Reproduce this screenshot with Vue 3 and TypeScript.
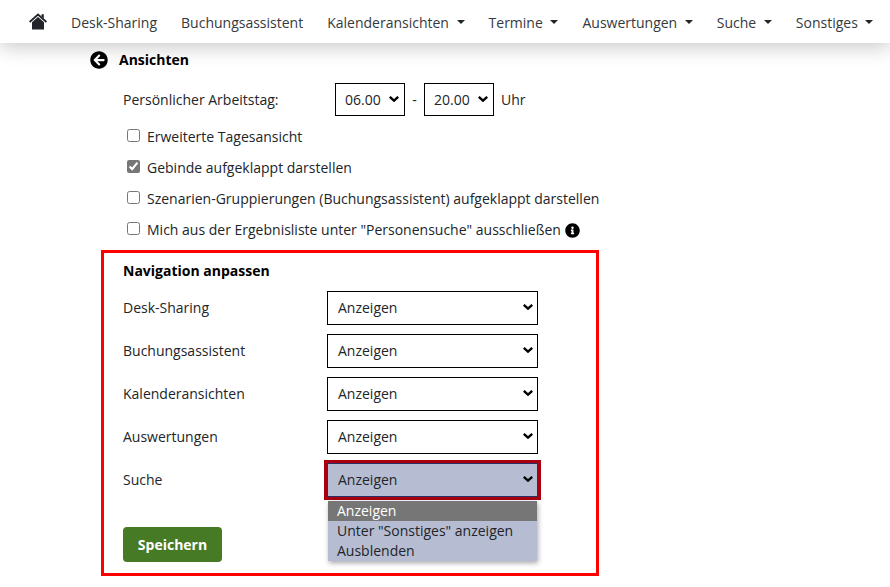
<script setup lang="ts">
const navItems = [
  { label: 'Desk-Sharing', caret: false },
  { label: 'Buchungsassistent', caret: false },
  { label: 'Kalenderansichten', caret: true },
  { label: 'Termine', caret: true },
  { label: 'Auswertungen', caret: true },
  { label: 'Suche', caret: true },
  { label: 'Sonstiges', caret: true },
]
const checks = [
  { label: 'Erweiterte Tagesansicht', checked: false, info: false },
  { label: 'Gebinde aufgeklappt darstellen', checked: true, info: false },
  { label: 'Szenarien-Gruppierungen (Buchungsassistent) aufgeklappt darstellen', checked: false, info: false },
  { label: 'Mich aus der Ergebnisliste unter "Personensuche" ausschließen', checked: false, info: true },
]
const rows = ['Desk-Sharing', 'Buchungsassistent', 'Kalenderansichten', 'Auswertungen']
const options = ['Anzeigen', 'Unter "Sonstiges" anzeigen', 'Ausblenden']
</script>

<template>
  <div class="page">
    <nav class="navbar">
      <a class="home" aria-label="Start">
        <svg width="18" height="17" viewBox="0 0 18 17">
          <path fill="#212529" d="M3 9.300 9 4l6 5.300V16.500H3z" />
          <path fill="#212529" d="M12.500 1.200h2.300v4.200l-2.300-2z" />
          <path fill="none" stroke="#212529" stroke-width="1.800" d="M.6 9 9 1.500 17.400 9" />
        </svg>
      </a>
      <a v-for="item in navItems" :key="item.label" class="nav-link">
        {{ item.label }}<span v-if="item.caret" class="caret"></span>
      </a>
    </nav>

    <main class="content">
      <h1 class="heading">
        <svg width="18" height="18" viewBox="0 0 512 512"><path fill="#000" d="M256 504C119 504 8 393 8 256S119 8 256 8s248 111 248 248-111 248-248 248zm28.900-143.600L209.400 288H392c13.300 0 24-10.700 24-24v-16c0-13.300-10.700-24-24-24H209.400l75.500-72.400c9.700-9.300 9.900-24.800.4-34.300l-11-10.900c-9.400-9.400-24.600-9.400-33.900 0L107.700 239c-9.400 9.400-9.400 24.600 0 33.900l132.700 132.700c9.400 9.400 24.600 9.400 33.900 0l11-10.900c9.500-9.500 9.300-25-.4-34.300z"/></svg>
        <span>Ansichten</span>
      </h1>

      <div class="workday">
        <label class="workday-label">Persönlicher Arbeitstag:</label>
        <select class="select small"><option>06.00</option></select>
        <span class="dash">-</span>
        <select class="select small"><option>20.00</option></select>
        <span class="uhr">Uhr</span>
      </div>

      <div class="checks">
        <label v-for="c in checks" :key="c.label" class="check">
          <input type="checkbox" :checked="c.checked" class="box" />
          <span>{{ c.label }}</span>
          <svg v-if="c.info" class="info" width="15" height="15" viewBox="0 0 512 512"><path fill="#000" d="M256 8C119 8 8 119 8 256s111 248 248 248 248-111 248-248S393 8 256 8zm0 110c23.200 0 42 18.800 42 42s-18.800 42-42 42-42-18.800-42-42 18.800-42 42-42zm56 254c0 6.600-5.400 12-12 12h-88c-6.600 0-12-5.400-12-12v-24c0-6.600 5.400-12 12-12h12v-64h-12c-6.600 0-12-5.400-12-12v-24c0-6.600 5.400-12 12-12h64c6.600 0 12 5.400 12 12v100h12c6.600 0 12 5.400 12 12v24z"/></svg>
        </label>
      </div>

      <section class="panel">
        <h2 class="panel-title">Navigation anpassen</h2>
        <div v-for="r in rows" :key="r" class="row">
          <label>{{ r }}</label>
          <select class="select wide"><option>Anzeigen</option></select>
        </div>
        <div class="row">
          <label>Suche</label>
          <div class="open-wrap">
            <select class="select wide focused"><option>Anzeigen</option></select>
            <ul class="dropdown">
              <li v-for="(o, i) in options" :key="o" :class="{ active: i === 0 }">{{ o }}</li>
            </ul>
          </div>
        </div>
        <button class="save">Speichern</button>
      </section>
    </main>
  </div>
</template>

<style>
html, body { margin: 0; background: #fff; }
</style>

<style scoped>
.page {
  width: 890px;
  height: 587px;
  overflow: hidden;
  font-family: "Open Sans", sans-serif;
  font-size: 14px;
  color: #212529;
  background: #fff;
  position: relative;
}
.navbar {
  height: 43px;
  display: flex;
  align-items: center;
  padding-left: 29px;
  background: #fff;
  box-shadow: 0 4px 20px rgba(0, 0, 0, 0.22);
  position: relative;
  z-index: 1;
  white-space: nowrap;
}
.home { display: flex; margin-right: 12px; }
.nav-link {
  box-sizing: border-box;
  padding: 2px 12px 0;
  color: #343a40;
  display: flex;
  align-items: center;
  height: 100%;
}
.caret {
  width: 0;
  height: 0;
  margin: -2px 0 0 7.62px;
  border-top: 4px solid #212529;
  border-left: 4px solid transparent;
  border-right: 4px solid transparent;
}
.content { padding: 7px 0 0 90px; }
.heading {
  margin: 0;
  display: flex;
  align-items: center;
  gap: 11px;
  font-size: 14px;
  font-weight: 700;
  color: #000;
  height: 19px;
}
.workday {
  display: flex;
  align-items: center;
  margin: 14px 0 0 33px;
  height: 33px;
}
.workday-label { width: 212px; }
.select {
  appearance: none;
  box-sizing: border-box;
  height: 34px;
  border: 1px solid #000;
  border-radius: 0;
  background-color: #fff;
  background-image: url("data:image/svg+xml,%3Csvg xmlns='http://www.w3.org/2000/svg' width='10' height='6' viewBox='0 0 10 6'%3E%3Cpath d='M.8 .8 5 4.700 9.200 .8' fill='none' stroke='%23000' stroke-width='2.300'/%3E%3C/svg%3E");
  background-repeat: no-repeat;
  background-position: right 4px top 12px;
  background-size: 10px 6px;
  color: #212529;
  font-family: inherit;
  font-size: 14px;
  padding: 0 6px 2px 10px;
  outline: none;
}
.select.small { width: 70px; height: 33px; padding: 0 6px 0 9px; background-position: right 5px top 12px; }
.select.wide { width: 211px; }
.dash { width: 19px; text-align: center; }
.uhr { margin-left: 7px; }
.checks {
  display: flex;
  flex-direction: column;
  margin: 5px 0 0 37px;
}
.check {
  display: flex;
  align-items: center;
  height: 31px;
}
.box {
  width: 13px;
  height: 13px;
  margin: 0 7px 0 0;
  accent-color: #767676;
  position: relative;
  top: -1px;
}
.info { margin-left: 4px; position: relative; top: 1px; }
.panel {
  box-sizing: border-box;
  width: 498px;
  height: 326px;
  margin: 5px 0 0 11px;
  border: 3px solid #f00;
  padding: 8px 19px 0;
}
.panel-title {
  margin: 0 0 11px;
  font-size: 14px;
  font-weight: 700;
  color: #000;
  height: 19px;
  line-height: 19px;
}
.row {
  display: grid;
  grid-template-columns: 204px 211px;
  align-items: center;
  height: 34px;
  margin-bottom: 9px;
}
.row > label { padding-bottom: 2px; }
.open-wrap { position: relative; height: 34px; }
.select.focused {
  display: block;
  background-color: #b6bcd2;
  outline: 3px solid #a80010;
  outline-offset: 0;
  border-color: #2b2f66;
}
.dropdown {
  position: absolute;
  z-index: 2;
  top: 38px;
  left: 1px;
  width: 209px;
  margin: 0;
  padding: 0;
  list-style: none;
  background: #b6bcd2;
  box-shadow: 1px 2px 5px rgba(0, 0, 0, 0.35);
}
.dropdown li {
  height: 20px;
  line-height: 20px;
  padding-left: 9px;
  color: #212529;
}
.dropdown li.active { background: #767676; color: #fff; }
.save {
  display: block;
  margin-top: 30px;
  width: 99px;
  height: 35px;
  border: 0;
  border-radius: 4px;
  background: #477a24;
  color: #fff;
  font-family: inherit;
  font-size: 14px;
  font-weight: 700;
}
</style>
